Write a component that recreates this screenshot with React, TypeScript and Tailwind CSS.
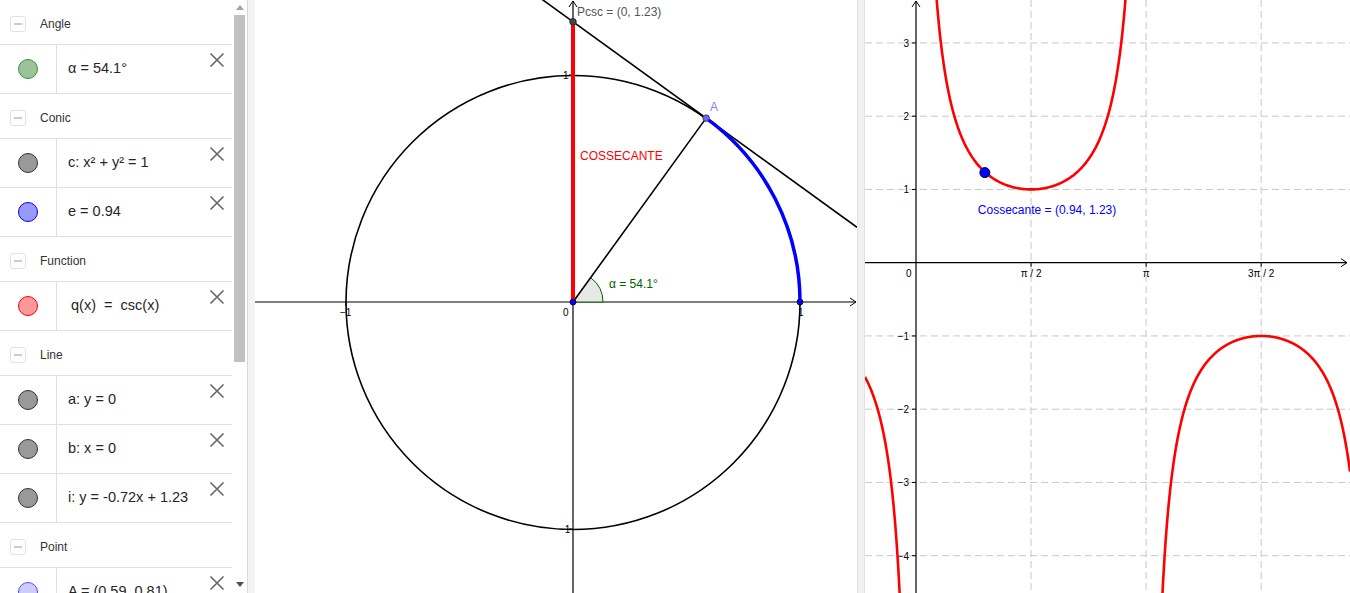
import React from "react";

type Row =
  | { kind: "header"; label: string }
  | { kind: "item"; fill: string; stroke: string; text: string; indent?: boolean };

const rows: Row[] = [
  { kind: "header", label: "Angle" },
  { kind: "item", fill: "#99c499", stroke: "#3d8f3d", text: "α = 54.1°" },
  { kind: "header", label: "Conic" },
  { kind: "item", fill: "#999999", stroke: "#333333", text: "c: x² + y² = 1" },
  { kind: "item", fill: "#9999ff", stroke: "#0000ff", text: "e = 0.94" },
  { kind: "header", label: "Function" },
  { kind: "item", fill: "#ff9999", stroke: "#ff0000", text: "q(x)  =  csc(x)", indent: true },
  { kind: "header", label: "Line" },
  { kind: "item", fill: "#999999", stroke: "#333333", text: "a: y = 0" },
  { kind: "item", fill: "#999999", stroke: "#333333", text: "b: x = 0" },
  { kind: "item", fill: "#999999", stroke: "#333333", text: "i: y = -0.72x + 1.23" },
  { kind: "header", label: "Point" },
  { kind: "item", fill: "#ccccff", stroke: "#4d4dff", text: "A = (0.59, 0.81)" },
];

function CloseIcon() {
  return (
    <svg width="16" height="16" viewBox="0 0 16 16">
      <path d="M1.5 1.5 L14.5 14.5 M14.5 1.5 L1.5 14.5" stroke="#666" strokeWidth="1.6" fill="none" />
    </svg>
  );
}

function AlgebraRow({ row }: { row: Row }) {
  if (row.kind === "header") {
    return (
      <div className="flex h-[45px] items-center border-b border-[#e0e0e0] pt-[4px]">
        <div className="ml-[10px] flex h-[16px] w-[16px] items-center justify-center rounded-[3px] border border-[#e2e2e2]">
          <div className="h-[2px] w-[8px] bg-[#cccccc]" />
        </div>
        <span className="ml-[14px] text-[12px] text-[#333]">{row.label}</span>
      </div>
    );
  }
  return (
    <div className="flex h-[49px] border-b border-[#e0e0e0]">
      <div className="flex w-[57px] shrink-0 items-center justify-center border-r border-[#e0e0e0]">
        <div
          className="h-[20px] w-[20px] rounded-full border"
          style={{ background: row.fill, borderColor: row.stroke }}
        />
      </div>
      <div
        className={
          "flex flex-1 items-center whitespace-pre font-['Liberation_Sans_Narrow','Liberation_Sans',sans-serif] text-[14.5px] text-[#262626] " +
          (row.indent ? "pl-[14px]" : "pl-[11px]")
        }
      >
        {row.text}
      </div>
      <div className="mr-[7px] mt-[7px] self-start">
        <CloseIcon />
      </div>
    </div>
  );
}

function Arrow({ x, y, dir }: { x: number; y: number; dir: "up" | "right" }) {
  const d =
    dir === "right"
      ? `M${x - 6} ${y - 4} L${x} ${y} L${x - 6} ${y + 4}`
      : `M${x - 4} ${y + 6} L${x} ${y} L${x + 4} ${y + 6}`;
  return <path d={d} stroke="#000" strokeWidth="1" fill="none" />;
}

// unit circle view
function CircleView() {
  const ox = 318;
  const oy = 302;
  const r = 227;
  const a = (54.1 * Math.PI) / 180;
  const ax = ox + r * Math.cos(a);
  const ay = oy - r * Math.sin(a);
  const csc = 1 / Math.sin(a);
  const cot = Math.cos(a) / Math.sin(a);
  const py = oy - r * csc;
  const lineY = (px: number) => oy - r * (csc - cot * ((px - ox) / r));
  const ar = 30;
  const lbl = "font-['Liberation_Sans',Arial,sans-serif]";
  return (
    <svg width="602" height="593" className="block">
      {/* axes */}
      <line x1="0" y1={oy} x2="601" y2={oy} stroke="#000" strokeWidth="1.2" />
      <Arrow x={601} y={oy} dir="right" />
      <line x1={ox} y1="593" x2={ox} y2="1" stroke="#000" strokeWidth="1.2" />
      <Arrow x={ox} y={1} dir="up" />
      {[-1, 1].map((k) => (
        <line key={k} x1={ox + k * r} y1={oy} x2={ox + k * r} y2={oy + 4} stroke="#000" />
      ))}
      {[-1, 1].map((k) => (
        <line key={"y" + k} x1={ox - 4} y1={oy - k * r} x2={ox} y2={oy - k * r} stroke="#000" />
      ))}
      <g className={lbl} fontSize="10" fill="#000">
        <text x={ox - 10} y={oy + 14}>0</text>
        <text x={ox - r - 6} y={oy + 14}>−1</text>
        <text x={ox + r - 2} y={oy + 14}>1</text>
        <text x={ox - 10} y={oy - r + 4}>1</text>
        <text x={ox - 14} y={oy + r + 4}>−1</text>
      </g>
      {/* circle */}
      <circle cx={ox} cy={oy + 0.5} r={r} fill="none" stroke="#000" strokeWidth="1.6" />
      {/* angle sector */}
      <path
        d={`M${ox} ${oy} L${ox + ar} ${oy} A${ar} ${ar} 0 0 0 ${ox + ar * Math.cos(a)} ${oy - ar * Math.sin(a)} Z`}
        fill="#e7e9e7"
        stroke="none"
      />
      <path
        d={`M${ox} ${oy} L${ox + ar} ${oy} A${ar} ${ar} 0 0 0 ${ox + ar * Math.cos(a)} ${oy - ar * Math.sin(a)}`}
        fill="none"
        stroke="#006400"
        strokeWidth="1"
      />
      {/* tangent line */}
      <line x1="0" y1={lineY(0)} x2="602" y2={lineY(602)} stroke="#000" strokeWidth="1.6" />
      {/* radius */}
      <line x1={ox} y1={oy} x2={ax} y2={ay} stroke="#000" strokeWidth="1.6" />
      {/* blue arc */}
      <path d={`M${ox + r} ${oy} A${r} ${r} 0 0 0 ${ax} ${ay}`} fill="none" stroke="#0000ff" strokeWidth="3.5" />
      {/* cosecant segment */}
      <line x1={ox} y1={oy} x2={ox} y2={py} stroke="#ff0000" strokeWidth="4" />
      {/* points */}
      <circle cx={ox} cy={oy} r="3" fill="#0000ff" stroke="#000033" strokeWidth="0.8" />
      <circle cx={ox + r} cy={oy} r="3" fill="#0000ff" stroke="#000033" strokeWidth="0.8" />
      <circle cx={ax} cy={ay} r="3.3" fill="#6666ff" stroke="#333" strokeWidth="0.8" />
      <circle cx={ox} cy={py} r="3.3" fill="#444" stroke="#222" strokeWidth="0.8" />
      <g className={lbl} fontSize="12">
        <text x={ox + 4} y={py - 6} fill="#555555">Pcsc = (0, 1.23)</text>
        <text x={ax + 4} y={ay - 7} fill="#7f7fff">A</text>
        <text x={ox + 7} y="160" fill="#ff0000">COSSECANTE</text>
        <text x={ox + 36} y={oy - 14} fill="#006400">α = 54.1°</text>
      </g>
    </svg>
  );
}

function cscPath(ox: number, oy: number, u: number, w: number) {
  let d = "";
  let pen = false;
  for (let px = 0; px <= w; px += 0.5) {
    const x = (px - ox) / u;
    const s = Math.sin(x);
    const y = Math.abs(s) < 1e-9 ? Infinity : 1 / s;
    const py = oy - y * u;
    if (!isFinite(py) || py < -40 || py > 640) {
      pen = false;
      continue;
    }
    d += (pen ? "L" : "M") + px.toFixed(1) + " " + py.toFixed(1) + " ";
    pen = true;
  }
  return d;
}

// function graph view
function GraphView() {
  const w = 485;
  const ox = 51;
  const oy = 262.7;
  const u = 73.25;
  const lbl = "font-['Liberation_Sans',Arial,sans-serif]";
  const ys = [3, 2, 1, -1, -2, -3, -4];
  const xs = [
    { k: 1, t: "π / 2" },
    { k: 2, t: "π" },
    { k: 3, t: "3π / 2" },
  ];
  const bx = ox + 0.94 * u;
  const by = oy - 1.23 * u;
  return (
    <svg width={w} height="593" className="block">
      {ys.map((k) => (
        <line key={k} x1="0" y1={oy - k * u} x2={w} y2={oy - k * u} stroke="#c8c8c8" strokeDasharray="7 4" />
      ))}
      {xs.map(({ k }) => (
        <line
          key={k}
          x1={ox + (k * Math.PI * u) / 2}
          y1="0"
          x2={ox + (k * Math.PI * u) / 2}
          y2="593"
          stroke="#c8c8c8"
          strokeDasharray="7 4"
        />
      ))}
      <line x1="0" y1={oy} x2={w - 3} y2={oy} stroke="#000" strokeWidth="1.2" />
      <Arrow x={w - 3} y={oy} dir="right" />
      <line x1={ox} y1="593" x2={ox} y2="1" stroke="#000" strokeWidth="1.2" />
      <Arrow x={ox} y={1} dir="up" />
      <g className={lbl} fontSize="10" fill="#000">
        <text x={ox - 10} y={oy + 14}>0</text>
        {ys.map((k) => (
          <g key={k}>
            <line x1={ox - 4} y1={oy - k * u} x2={ox} y2={oy - k * u} stroke="#000" />
            <text x={ox - 7} y={oy - k * u + 4} textAnchor="end">
              {k < 0 ? "−" + -k : k}
            </text>
          </g>
        ))}
        {xs.map(({ k, t }) => (
          <g key={k}>
            <line
              x1={ox + (k * Math.PI * u) / 2}
              y1={oy}
              x2={ox + (k * Math.PI * u) / 2}
              y2={oy + 4}
              stroke="#000"
            />
            <text x={ox + (k * Math.PI * u) / 2} y={oy + 14} textAnchor="middle">
              {t}
            </text>
          </g>
        ))}
      </g>
      <path d={cscPath(ox, oy, u, w)} fill="none" stroke="#ff0000" strokeWidth="2.6" />
      <circle cx={bx} cy={by} r="5" fill="#0000ff" stroke="#000044" strokeWidth="1" />
      <text x={bx - 7} y={by + 41} fontSize="12" fill="#0000ff" className={lbl}>
        Cossecante = (0.94, 1.23)
      </text>
    </svg>
  );
}

export default function App() {
  return (
    <div className="flex h-[593px] w-[1350px] overflow-hidden bg-white font-['Liberation_Sans',Arial,sans-serif]">
      <div className="flex w-[255px] shrink-0">
        <div className="w-[232px] shrink-0 overflow-hidden">
          {rows.map((r, i) => (
            <AlgebraRow key={i} row={r} />
          ))}
        </div>
        <div className="flex w-[15px] shrink-0 flex-col bg-white">
          <div className="flex h-[15px] items-center justify-center">
            <svg width="8" height="5">
              <path d="M0 5 L4 0 L8 5 Z" fill="#a3a3a3" />
            </svg>
          </div>
          <div className="ml-[2px] h-[347px] w-[11px] bg-[#c1c1c1]" />
          <div className="flex-1" />
          <div className="flex h-[18px] items-center justify-center">
            <svg width="8" height="5">
              <path d="M0 0 L8 0 L4 5 Z" fill="#505050" />
            </svg>
          </div>
        </div>
        <div className="w-[8px] shrink-0 border-l border-[#d9d9d9] bg-[#f3f3f3]" />
      </div>
      <div className="w-[602px] shrink-0">
        <CircleView />
      </div>
      <div className="w-[8px] shrink-0 border-x border-[#e2e2e2] bg-[#f1f1f1]" />
      <div className="w-[485px] shrink-0">
        <GraphView />
      </div>
    </div>
  );
}
